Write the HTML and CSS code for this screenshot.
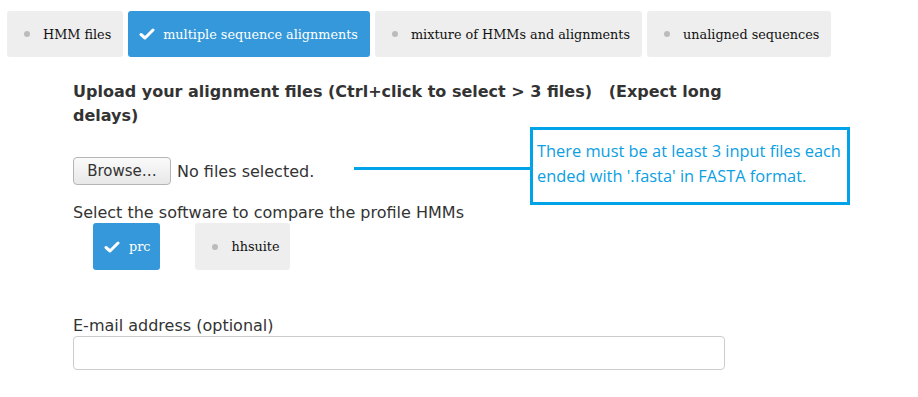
FILE: index.html
```html
<!DOCTYPE html>
<html lang="en">

<head>
    <meta charset="utf-8">
    <meta name="viewport" content="width=device-width, initial-scale=1.0">
    <title>Compare profile HMMs</title>
    <link rel="stylesheet" href="styles.css">
</head>

<body>

    <div class="tabs">
        <div class="tab"><span class="dot"></span>HMM files</div>
        <div class="tab active">
            <svg class="check" viewBox="0 0 16 12"><polyline points="2,6.5 6,10 14,2"></polyline></svg>multiple sequence alignments
        </div>
        <div class="tab"><span class="dot"></span>mixture of HMMs and alignments</div>
        <div class="tab"><span class="dot"></span>unaligned sequences</div>
    </div>

    <div class="form">
        <h3 class="upload-title">Upload your alignment files (Ctrl+click to select &gt; 3 files) &nbsp;&nbsp;(Expect long delays)</h3>

        <div class="file-row">
            <button class="browse">Browse…</button>
            <span class="nofile">No files selected.</span>
        </div>

        <!-- hint pointing at the file input -->
        <div class="hint-line"></div>
        <div class="hint">There must be at least 3 input files each ended with '.fasta' in FASTA format.</div>

        <p class="label">Select the software to compare the profile HMMs</p>
        <div class="software">
            <div class="opt active">
                <svg class="check" viewBox="0 0 16 12"><polyline points="2,6.5 6,10 14,2"></polyline></svg>prc
            </div>
            <div class="opt"><span class="dot"></span>hhsuite</div>
        </div>

        <p class="label email-label">E-mail address (optional)</p>
        <input class="email" type="text">
    </div>

</body>

</html>
```

FILE: styles.css
```css
body {
    margin: 0;
    font-family: "DejaVu Sans", sans-serif;
    color: #333;
    background: white;
}

.tabs {
    display: flex;
    gap: 5px;
    margin: 11px 0 0 7px;
}

.tab,
.opt {
    display: flex;
    align-items: center;
    height: 46px;
    padding: 0 12px 0 17px;
    background-color: #eeeeee;
    border-radius: 3px;
    font-family: "DejaVu Serif", serif;
    font-size: 12.8px;
    color: #111;
    white-space: nowrap;
}

.tab.active,
.opt.active {
    background-color: #3498db;
    color: white;
    padding-left: 11px;
}

.tab.active .check {
    margin-right: 8px;
}

.dot {
    width: 6px;
    height: 6px;
    border-radius: 50%;
    background-color: #bbbbbb;
    margin-right: 13px;
}

.check {
    width: 16px;
    height: 12px;
    margin-right: 10px;
}

.check polyline {
    fill: none;
    stroke: white;
    stroke-width: 3;
    stroke-linecap: round;
    stroke-linejoin: round;
}

.form {
    position: relative;
    width: 652px;
    margin-left: 73px;
}

.upload-title {
    margin: 23px 0 0 0;
    font-size: 16px;
    line-height: 24px;
    font-weight: bold;
}

.file-row {
    display: flex;
    align-items: center;
    margin-top: 29px;
}

.browse {
    height: 28px;
    width: 98px;
    margin: 0 6px 0 0;
    border: 1px solid #b5b5b5;
    border-radius: 4px;
    background: linear-gradient(#fafafa, #e8e8e8);
    font-family: "DejaVu Sans", sans-serif;
    font-size: 15px;
    color: #333;
}

.nofile {
    font-size: 16px;
}

.hint-line {
    position: absolute;
    left: 281px;
    top: 87px;
    width: 178px;
    height: 3px;
    background-color: #00a2e8;
}

.hint {
    position: absolute;
    left: 457px;
    top: 47px;
    width: 305px;
    height: 60px;
    padding: 8px 5px 4px 4px;
    border: 3px solid #00a2e8;
    font-family: "Open Sans", sans-serif;
    font-size: 16.4px;
    line-height: 25px;
    color: #0ba0e2;
}

.label {
    margin: 16px 0 0 0;
    font-size: 16px;
    line-height: 24px;
}

.software {
    display: flex;
    gap: 35px;
    margin-left: 20px;
    margin-top: -2px;
}

.opt {
    height: 47px;
    padding-right: 10px;
}

.opt.active {
    padding: 0 10px 0 11px;
}

.opt.active .check {
    margin-right: 9px;
}

.email-label {
    margin-top: 44px;
}

.email {
    display: block;
    box-sizing: border-box;
    width: 652px;
    height: 34px;
    margin-top: -2px;
    border: 1px solid #cccccc;
    border-radius: 4px;
}
```
